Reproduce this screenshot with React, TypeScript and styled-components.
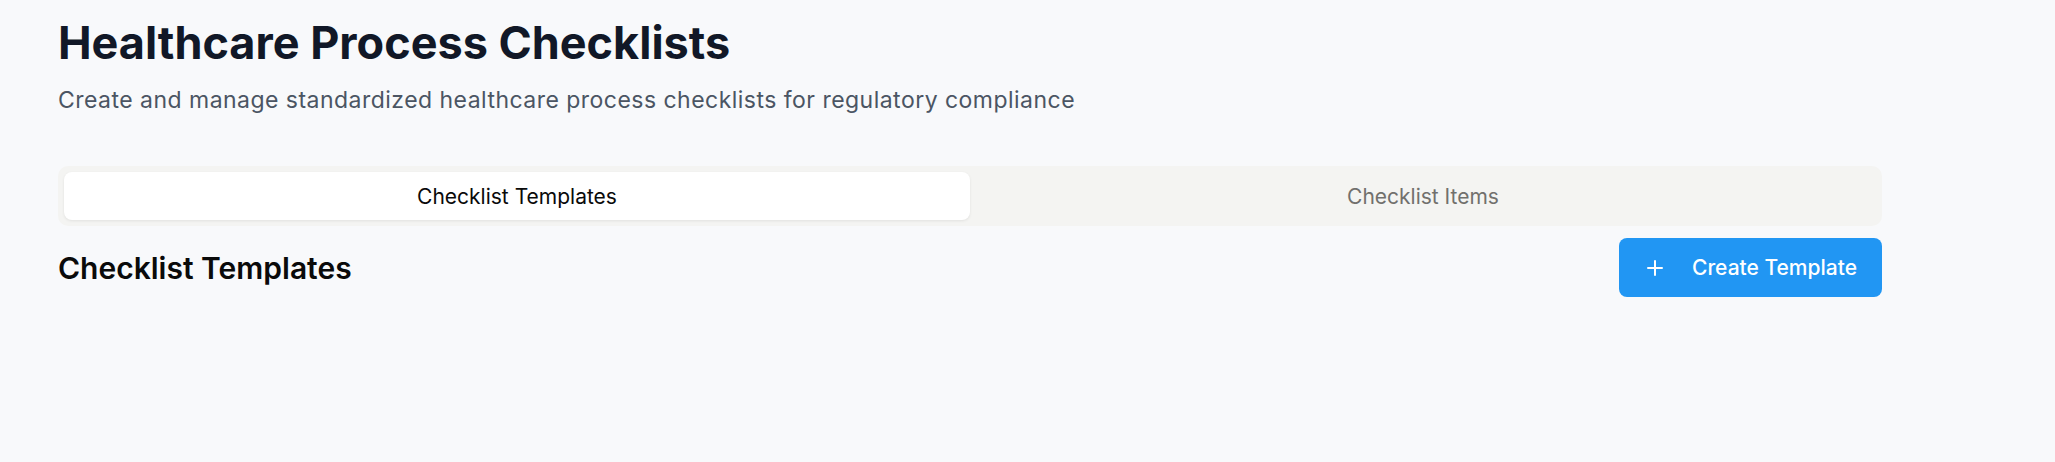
import React, { useState } from "react";
import styled, { createGlobalStyle } from "styled-components";
import { Plus } from "lucide-react";

const GlobalStyle = createGlobalStyle`
  html, body {
    margin: 0;
    padding: 0;
    background: #f8f9fb;
    font-family: Inter, "Noto Sans", sans-serif;
  }
  * { box-sizing: border-box; }
`;

const Page = styled.main`
  min-height: 462px;
  background: #f8f9fb;
  padding: 16px 0 0 58px;
`;

const Container = styled.div`
  width: 1824px;
  display: flex;
  flex-direction: column;
`;

const Title = styled.h1`
  margin: 0;
  font-size: 45px;
  line-height: 53px;
  font-weight: 700;
  color: #111827;
`;

const Subtitle = styled.p`
  margin: 15px 0 0;
  font-size: 23px;
  line-height: 33px;
  font-weight: 400;
  letter-spacing: 0.47px;
  color: #4b5563;
`;

const TabList = styled.div`
  margin-top: 49px;
  display: grid;
  grid-template-columns: 1fr 1fr;
  padding: 6px;
  background: #f4f4f2;
  border-radius: 10px;
`;

const Tab = styled.button<{ $active: boolean }>`
  height: 48px;
  border: none;
  border-radius: 8px;
  font-family: inherit;
  font-size: 21px;
  font-weight: 400;
  cursor: pointer;
  background: ${(p) => (p.$active ? "#ffffff" : "transparent")};
  color: ${(p) => (p.$active ? "#0a0a0a" : "#71706d")};
  box-shadow: ${(p) => (p.$active ? "0 1px 3px rgba(0,0,0,0.08)" : "none")};
`;

const SectionHeader = styled.div`
  margin-top: 12px;
  display: flex;
  align-items: center;
  justify-content: space-between;
`;

const SectionTitle = styled.h2`
  margin: 0;
  font-size: 30px;
  line-height: 36px;
  font-weight: 600;
  color: #0a0a0a;
`;

const PrimaryButton = styled.button`
  height: 59px;
  display: inline-flex;
  align-items: center;
  gap: 25px;
  padding: 0 25px 0 24px;
  border: none;
  border-radius: 8px;
  background: #2196f3;
  color: #ffffff;
  font-family: inherit;
  font-size: 21px;
  font-weight: 500;
  cursor: pointer;
`;

export default function App() {
  const [tab, setTab] = useState<"templates" | "items">("templates");
  return (
    <>
      <GlobalStyle />
      <Page>
        <Container>
          <Title>Healthcare Process Checklists</Title>
          <Subtitle>
            Create and manage standardized healthcare process checklists for regulatory compliance
          </Subtitle>
          <TabList>
            <Tab $active={tab === "templates"} onClick={() => setTab("templates")}>
              Checklist Templates
            </Tab>
            <Tab $active={tab === "items"} onClick={() => setTab("items")}>
              Checklist Items
            </Tab>
          </TabList>
          <SectionHeader>
            <SectionTitle>Checklist Templates</SectionTitle>
            <PrimaryButton>
              <Plus size={24} strokeWidth={2} />
              Create Template
            </PrimaryButton>
          </SectionHeader>
        </Container>
      </Page>
    </>
  );
}
